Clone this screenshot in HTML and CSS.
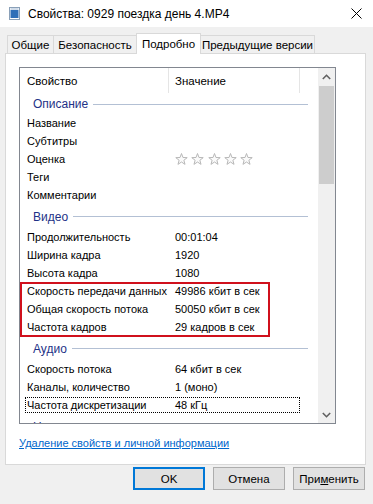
FILE: index.html
```html
<!DOCTYPE html>
<html lang="ru">
<head>
  <meta charset="UTF-8" />
  <title>Свойства: 0929 поездка день 4.MP4</title>
  <link rel="stylesheet" href="styles.css">
</head>
<body>
  <div class="dialog">
    <div class="titlebar">
      <svg class="title-icon" width="11" height="13" viewBox="0 0 11 13">
        <rect x="0.5" y="0.5" width="10" height="12" fill="#ffffff" stroke="#8aa0b8" />
        <rect x="1.5" y="3" width="8" height="8" fill="#2f6fb8" />
        <rect x="1.5" y="1.5" width="8" height="1" fill="#9fb8d4" />
      </svg>
      <span class="title-text">Свойства: 0929 поездка день 4.MP4</span>
      <svg class="close" width="11" height="11" viewBox="0 0 11 11">
        <path d="M0.5 0.5 L10.5 10.5 M10.5 0.5 L0.5 10.5" stroke="#000" stroke-width="1" />
      </svg>
    </div>

    <div class="tabs">
      <div class="tab tab-general">Общие</div>
      <div class="tab tab-security">Безопасность</div>
      <div class="tab tab-details active">Подробно</div>
      <div class="tab tab-versions">Предыдущие версии</div>
    </div>

    <div class="panel">
      <div class="list">
        <div class="list-body">
          <div class="list-header">
            <div class="hcell hcell-name">Свойство</div>
            <div class="hcell hcell-value">Значение</div>
          </div>

          <!-- Описание -->
          <div class="group group-first"><span>Описание</span><i class="group-line"></i></div>
          <div class="row"><span class="prop">Название</span><span class="val"></span></div>
          <div class="row"><span class="prop">Субтитры</span><span class="val"></span></div>
          <div class="row">
            <span class="prop">Оценка</span>
            <span class="val stars">
              <svg width="13" height="13" viewBox="0 0 13 13"><polygon points="6.5,0.5 7.97,4.48 12.21,4.65 8.88,7.27 10.03,11.35 6.5,9 2.97,11.35 4.12,7.27 0.79,4.65 5.03,4.48" /></svg>
              <svg width="13" height="13" viewBox="0 0 13 13"><polygon points="6.5,0.5 7.97,4.48 12.21,4.65 8.88,7.27 10.03,11.35 6.5,9 2.97,11.35 4.12,7.27 0.79,4.65 5.03,4.48" /></svg>
              <svg width="13" height="13" viewBox="0 0 13 13"><polygon points="6.5,0.5 7.97,4.48 12.21,4.65 8.88,7.27 10.03,11.35 6.5,9 2.97,11.35 4.12,7.27 0.79,4.65 5.03,4.48" /></svg>
              <svg width="13" height="13" viewBox="0 0 13 13"><polygon points="6.5,0.5 7.97,4.48 12.21,4.65 8.88,7.27 10.03,11.35 6.5,9 2.97,11.35 4.12,7.27 0.79,4.65 5.03,4.48" /></svg>
              <svg width="13" height="13" viewBox="0 0 13 13"><polygon points="6.5,0.5 7.97,4.48 12.21,4.65 8.88,7.27 10.03,11.35 6.5,9 2.97,11.35 4.12,7.27 0.79,4.65 5.03,4.48" /></svg>
            </span>
          </div>
          <div class="row"><span class="prop">Теги</span><span class="val"></span></div>
          <div class="row"><span class="prop">Комментарии</span><span class="val"></span></div>

          <!-- Видео -->
          <div class="group"><span>Видео</span><i class="group-line"></i></div>
          <div class="row"><span class="prop">Продолжительность</span><span class="val">00:01:04</span></div>
          <div class="row"><span class="prop">Ширина кадра</span><span class="val">1920</span></div>
          <div class="row"><span class="prop">Высота кадра</span><span class="val">1080</span></div>
          <div class="row"><span class="prop">Скорость передачи данных</span><span class="val">49986 кбит в сек</span></div>
          <div class="row"><span class="prop">Общая скорость потока</span><span class="val">50050 кбит в сек</span></div>
          <div class="row"><span class="prop">Частота кадров</span><span class="val">29 кадров в сек</span></div>

          <!-- Аудио -->
          <div class="group"><span>Аудио</span><i class="group-line"></i></div>
          <div class="row"><span class="prop">Скорость потока</span><span class="val">64 кбит в сек</span></div>
          <div class="row"><span class="prop">Каналы, количество</span><span class="val">1 (моно)</span></div>
          <div class="row focus"><span class="prop">Частота дискретизации</span><span class="val">48 кГц</span></div>

          <div class="group"><span>Носитель</span><i class="group-line"></i></div>
        </div>

        <div class="scrollbar">
          <div class="sb-btn">
            <svg width="9" height="6" viewBox="0 0 9 6"><polyline points="0.8,5 4.5,1.3 8.2,5" /></svg>
          </div>
          <div class="sb-thumb"></div>
          <div class="sb-track"></div>
          <div class="sb-btn">
            <svg width="9" height="6" viewBox="0 0 9 6"><polyline points="0.8,1 4.5,4.7 8.2,1" /></svg>
          </div>
        </div>

        <!-- annotation over the three rows -->
        <div class="highlight"></div>
      </div>

      <a class="remove-link" href="#">Удаление свойств и личной информации</a>
    </div>

    <div class="buttons">
      <button class="btn btn-default">OK</button>
      <button class="btn">Отмена</button>
      <button class="btn">При<u>м</u>енить</button>
    </div>
  </div>
</body>
</html>
```

FILE: styles.css
```css
body {
  margin: 0;
  padding: 0;
  background-color: #f0f0f0;
  font-family: 'Liberation Sans', Arial, sans-serif;
  font-size: 11px;
  color: #000;
}

.dialog {
  width: 373px;
  height: 504px;
  overflow: hidden;
}

/* title bar */
.titlebar {
  height: 27px;
  background: #fff;
  display: flex;
  align-items: center;
  padding-left: 9px;
  font-size: 12px;
}

.title-icon {
  margin-right: 8px;
}

.title-text {
  flex: 1;
}

.close {
  margin-right: 11px;
}

/* tabs */
.tabs {
  display: flex;
  align-items: flex-end;
  height: 20px;
  margin-top: 6px;
  padding-left: 7px;
  position: relative;
  z-index: 1;
  font-size: 11.5px;
}

.tab {
  box-sizing: border-box;
  height: 18px;
  border: 1px solid #d9d9d9;
  border-bottom: none;
  margin-right: -1px;
  display: flex;
  align-items: center;
  justify-content: center;
  background: #f0f0f0;
  white-space: nowrap;
}

.tab-general { width: 47px; }
.tab-security { width: 84px; }
.tab-details { width: 65px; }
.tab-versions { width: 115px; }

.tab.active {
  height: 21px;
  background: #fff;
  margin-bottom: -1px;
  padding-bottom: 1px;
  position: relative;
  z-index: 2;
}

/* white page */
.panel {
  box-sizing: border-box;
  margin-left: 5px;
  width: 361px;
  height: 412px;
  border: 1px solid #d9d9d9;
  background: #fff;
  padding: 13px 0 0 13px;
}

.list {
  box-sizing: border-box;
  width: 317px;
  height: 357px;
  border: 1px solid #828790;
  display: flex;
  position: relative;
}

.list-body {
  flex: 1;
  overflow: hidden;
}

.list-header {
  display: flex;
  height: 25px;
  font-size: 11.5px;
}

.hcell {
  box-sizing: border-box;
  display: flex;
  align-items: center;
  border-right: 1px solid #e5e5e5;
}

.hcell-name {
  width: 149px;
  padding-left: 7px;
}

.hcell-value {
  width: 131px;
  padding-left: 6px;
}

.group {
  box-sizing: border-box;
  height: 24px;
  display: flex;
  align-items: center;
  padding: 1px 0 0 13px;
  color: #1e3287;
  font-size: 12px;
}

.group-first {
  height: 21px;
}

.group-line {
  flex: 1;
  height: 1px;
  background: #b3c0d4;
  margin: 0 10px 0 5px;
}

.row {
  box-sizing: border-box;
  height: 18px;
  display: flex;
  align-items: center;
  padding-left: 7px;
  white-space: nowrap;
}

.row .prop {
  width: 148px;
  flex-shrink: 0;
}

.row.focus {
  height: 16px;
  margin: 1px 18px 1px 5px;
  padding-left: 1px;
  border: 1px dotted #000;
}

.stars {
  display: flex;
  gap: 3.3px;
  padding-top: 1px;
}

.stars polygon {
  fill: #fafafa;
  stroke: #b8b8b8;
  stroke-width: 1;
}

/* scrollbar */
.scrollbar {
  width: 17px;
  background: #f0f0f0;
  display: flex;
  flex-direction: column;
}

.sb-btn {
  height: 17px;
  display: flex;
  align-items: center;
  justify-content: center;
}

.sb-btn polyline {
  fill: none;
  stroke: #606060;
  stroke-width: 1.6;
}

.sb-thumb {
  height: 98px;
  margin: 1px 1px 0 1px;
  background: #cdcdcd;
}

.sb-track {
  flex: 1;
}

.highlight {
  position: absolute;
  left: 0;
  top: 214px;
  width: 250px;
  height: 55px;
  box-sizing: border-box;
  border: 2px solid #d0101c;
  pointer-events: none;
}

.remove-link {
  display: block;
  margin-top: 12px;
  line-height: 14px;
  font-size: 11px;
  color: #0066cc;
  text-decoration: underline;
  width: max-content;
}

/* bottom buttons */
.buttons {
  display: flex;
  justify-content: flex-end;
  gap: 8px;
  padding-right: 8px;
  margin-top: 2px;
}

.btn {
  box-sizing: border-box;
  width: 72px;
  height: 23px;
  background: #e1e1e1;
  border: 1px solid #adadad;
  font-family: inherit;
  font-size: 11.5px;
  color: #000;
  padding: 0;
}

.btn-default {
  border-color: #0078d7;
  box-shadow: inset 0 0 0 1px #0078d7;
}
```
